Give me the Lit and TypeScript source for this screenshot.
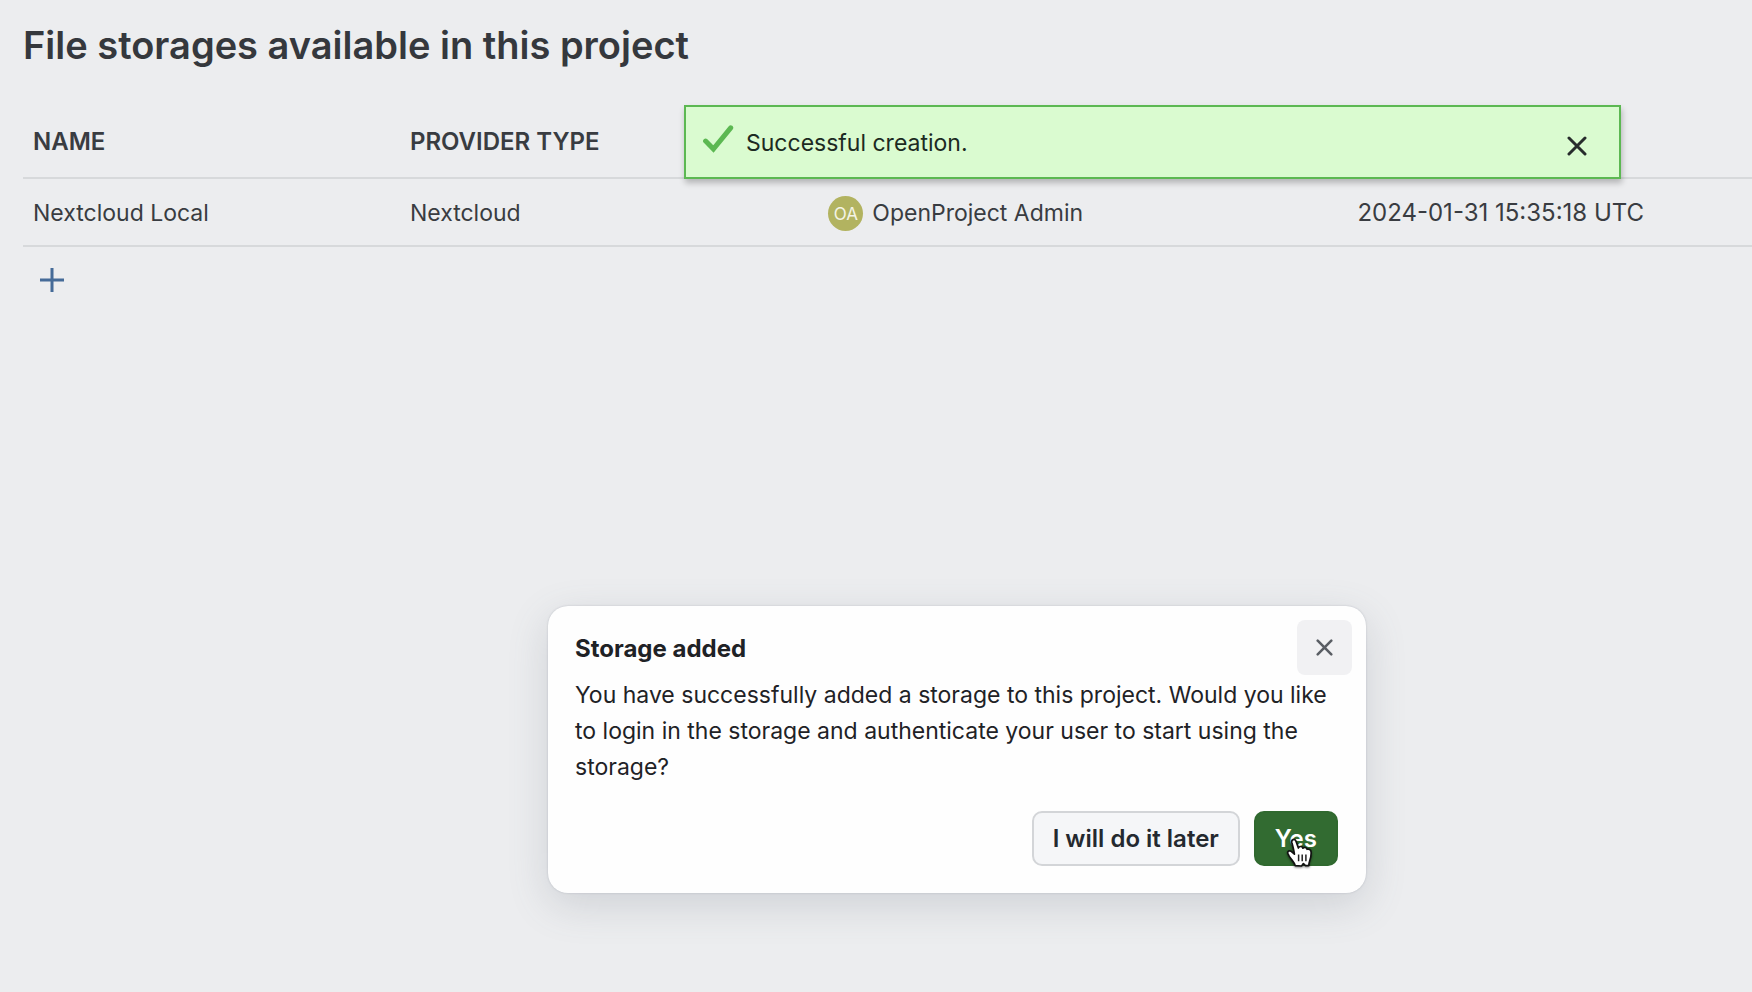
import { LitElement, html, css, svg } from "lit";
import { customElement, property, state } from "lit/decorators.js";

const crossIcon = svg`<path d="M2 2 18 18M18 2 2 18" />`;

@customElement("success-toast")
class SuccessToast extends LitElement {
  @property() message = "";

  static styles = css`
    :host {
      display: block;
    }
    .toast {
      box-sizing: border-box;
      display: flex;
      align-items: center;
      min-height: 74px;
      padding: 2px 32px 0 16px;
      border: 2px solid #5cb852;
      background: #dafbd0;
      box-shadow: 1px 4px 6px rgba(0, 0, 0, 0.24);
    }
    .check {
      flex: none;
      width: 32px;
      height: 32px;
      margin-bottom: 8px;
      fill: none;
      stroke: #5cb852;
      stroke-width: 5;
      stroke-linecap: round;
    }
    .message {
      flex: 1;
      margin: 0;
      padding-left: 12px;
    }
    .close {
      display: grid;
      place-items: center;
      width: 20px;
      height: 20px;
      margin-top: 6px;
      padding: 0;
      border: 0;
      background: none;
      color: #272c2c;
    }
    .cross {
      width: 20px;
      height: 20px;
      fill: none;
      stroke: currentColor;
      stroke-width: 3;
      stroke-linecap: round;
    }
  `;

  render() {
    return html`<div class="toast" role="status">
      <svg class="check" viewBox="0 0 32 32" aria-hidden="true">
        <path d="M3.6 18.1 11.4 26 28.7 4.8" />
      </svg>
      <p class="message">${this.message}</p>
      <button
        class="close"
        type="button"
        aria-label="Close notification"
        @click=${() => this.dispatchEvent(new CustomEvent("dismiss"))}
      >
        <svg class="cross" viewBox="0 0 20 20" aria-hidden="true">${crossIcon}</svg>
      </button>
    </div>`;
  }
}

@customElement("storage-dialog")
class StorageDialog extends LitElement {
  static styles = css`
    :host {
      display: block;
    }
    .dialog {
      display: grid;
      grid-template-columns: 1fr auto;
      padding: 14px 14px 27px 27px;
      border-radius: 20px;
      background: #fefefe;
      color: #1f2226;
      box-shadow:
        0 0 2px rgba(90, 100, 115, 0.3),
        0 12px 40px rgba(90, 100, 115, 0.2);
    }
    .title {
      margin: 0;
      padding-top: 11px;
      font-size: 24px;
      line-height: 36px;
      font-weight: 700;
    }
    .close {
      display: grid;
      place-items: center;
      width: 55px;
      height: 55px;
      padding: 0;
      border: 0;
      border-radius: 8px;
      background: #f1f1f3;
      color: #5a5e64;
    }
    .cross {
      width: 17px;
      height: 17px;
      fill: none;
      stroke: currentColor;
      stroke-width: 3;
      stroke-linecap: round;
    }
    .text {
      grid-column: 1 / -1;
      margin: 2px 0 0;
      line-height: 36px;
    }
    .actions {
      grid-column: 1 / -1;
      display: flex;
      justify-content: flex-end;
      gap: 14px;
      padding: 26px 14px 0 0;
    }
    .btn {
      position: relative;
      height: 55px;
      padding: 0 19px;
      border: 2px solid #d3d5d8;
      border-radius: 10px;
      background: #f5f6f8;
      color: #24292f;
      font-family: inherit;
      font-size: 24px;
      font-weight: 600;
    }
    .primary {
      border-color: #30692f;
      background: #326b31;
      color: #fff;
    }
    .pointer {
      position: absolute;
      left: 30px;
      top: 24px;
      width: 28px;
      height: 32px;
      filter: drop-shadow(0 1px 1px rgba(0, 0, 0, 0.5));
    }
  `;

  private close() {
    this.dispatchEvent(new CustomEvent("dismiss"));
  }

  render() {
    return html`<section class="dialog" role="dialog" aria-labelledby="title" aria-describedby="text">
      <h2 class="title" id="title">Storage added</h2>
      <button class="close" type="button" aria-label="Close dialog" @click=${this.close}>
        <svg class="cross" viewBox="0 0 20 20" aria-hidden="true">${crossIcon}</svg>
      </button>
      <p class="text" id="text">
        You have successfully added a storage to this project. Would you like to login in the
        storage and authenticate your user to start using the storage?
      </p>
      <div class="actions">
        <button class="btn" type="button" @click=${this.close}>I will do it later</button>
        <button class="btn primary" type="button" @click=${this.close}>
          Yes
          <svg class="pointer" viewBox="0 0 28 32" aria-hidden="true">
            <path
              d="M9.2 28.6C8.4 26 6.8 24.2 5 21.8 3.6 20 2.3 17.8 1.8 16.2 1.3 14.2 3.6 13.2 5.2 14.4L8.4 17.2C8 13.6 6.8 9 5.8 5.4 5.2 2.6 8.6 1.2 9.9 4L12.4 11C13.3 9 16.2 9 16.9 11.2 18.2 9.8 20.6 10.3 21.1 12.3 23 11.5 25 12.8 25.1 15 25.4 19 24.6 21.6 23.6 24.2 23 25.8 22.9 27 22.8 28.6L19.5 28.6 17.4 26.6 15.6 29Z"
              fill="#fff"
              stroke="#111"
              stroke-width="1.7"
              stroke-linejoin="round"
            />
            <path d="M12.6 17.6V24.2M16.2 17.6V24.2M19.9 17.6V24.2" fill="none" stroke="#222" stroke-width="1.5" />
          </svg>
        </button>
      </div>
    </section>`;
  }
}

interface Storage {
  name: string;
  provider: string;
  initials: string;
  creator: string;
  created: string;
}

@customElement("app-root")
class AppRoot extends LitElement {
  @state() private toastOpen = true;
  @state() private dialogOpen = true;

  private storages: Storage[] = [
    {
      name: "Nextcloud Local",
      provider: "Nextcloud",
      initials: "OA",
      creator: "OpenProject Admin",
      created: "2024-01-31 15:35:18 UTC",
    },
  ];

  static styles = css`
    :host {
      display: block;
      position: relative;
      box-sizing: border-box;
      min-height: 100vh;
      padding: 21px 0 0 23px;
      background: #ecedef;
      color: #393c41;
      font-family: Inter, "Liberation Sans", sans-serif;
      font-size: 23px;
      line-height: 36px;
    }
    .heading {
      margin: 0 0 36px;
      font-size: 38px;
      line-height: 48px;
      font-weight: 600;
      color: #35383d;
    }
    .storages {
      width: 100%;
      table-layout: fixed;
      border-collapse: collapse;
    }
    .col-name {
      width: 21.8%;
    }
    .col-provider {
      width: 24.2%;
    }
    .col-creator {
      width: 30.6%;
    }
    .head,
    .cell {
      padding: 16px 10px 14px;
      border-bottom: 2px solid #d7d9db;
      text-align: left;
      white-space: nowrap;
    }
    .head {
      padding: 19px 10px 17px;
      font-size: 24px;
      font-weight: 600;
      text-transform: uppercase;
    }
    .date {
      font-size: 24px;
    }
    .user {
      display: flex;
      align-items: center;
      gap: 9px;
    }
    .avatar {
      display: grid;
      place-items: center;
      width: 35px;
      height: 35px;
      border-radius: 50%;
      background: #b2b360;
      color: #f4f4e6;
      font-size: 17px;
    }
    .add {
      display: grid;
      place-items: center;
      width: 58px;
      height: 66px;
      padding: 0;
      border: 0;
      background: none;
      color: #456b98;
    }
    .plus {
      width: 26px;
      height: 26px;
      fill: none;
      stroke: currentColor;
      stroke-width: 3;
    }
    .toast-layer {
      position: absolute;
      top: 105px;
      right: 131px;
      width: min(937px, calc(100% - 154px));
      color: #1c2a22;
    }
    .dialog-layer {
      position: absolute;
      bottom: 99px;
      right: 386px;
      width: min(818px, calc(100% - 409px));
    }
  `;

  render() {
    return html`
      <main>
        <h1 class="heading">File storages available in this project</h1>
        <table class="storages">
          <colgroup>
            <col class="col-name" />
            <col class="col-provider" />
            <col class="col-creator" />
            <col />
          </colgroup>
          <thead>
            <tr>
              <th class="head" scope="col">Name</th>
              <th class="head" scope="col">Provider type</th>
              <td class="head"></td>
              <td class="head"></td>
            </tr>
          </thead>
          <tbody>
            ${this.storages.map(
              (s) => html`<tr>
                <td class="cell">${s.name}</td>
                <td class="cell">${s.provider}</td>
                <td class="cell">
                  <span class="user"><span class="avatar">${s.initials}</span>${s.creator}</span>
                </td>
                <td class="cell date">${s.created}</td>
              </tr>`,
            )}
          </tbody>
        </table>
        <button class="add" type="button" aria-label="Add storage">
          <svg class="plus" viewBox="0 0 26 26" aria-hidden="true"><path d="M13 1V25M1 13H25" /></svg>
        </button>
      </main>
      ${this.toastOpen
        ? html`<success-toast
            class="toast-layer"
            message="Successful creation."
            @dismiss=${() => (this.toastOpen = false)}
          ></success-toast>`
        : null}
      ${this.dialogOpen
        ? html`<storage-dialog
            class="dialog-layer"
            @dismiss=${() => (this.dialogOpen = false)}
          ></storage-dialog>`
        : null}
    `;
  }
}
